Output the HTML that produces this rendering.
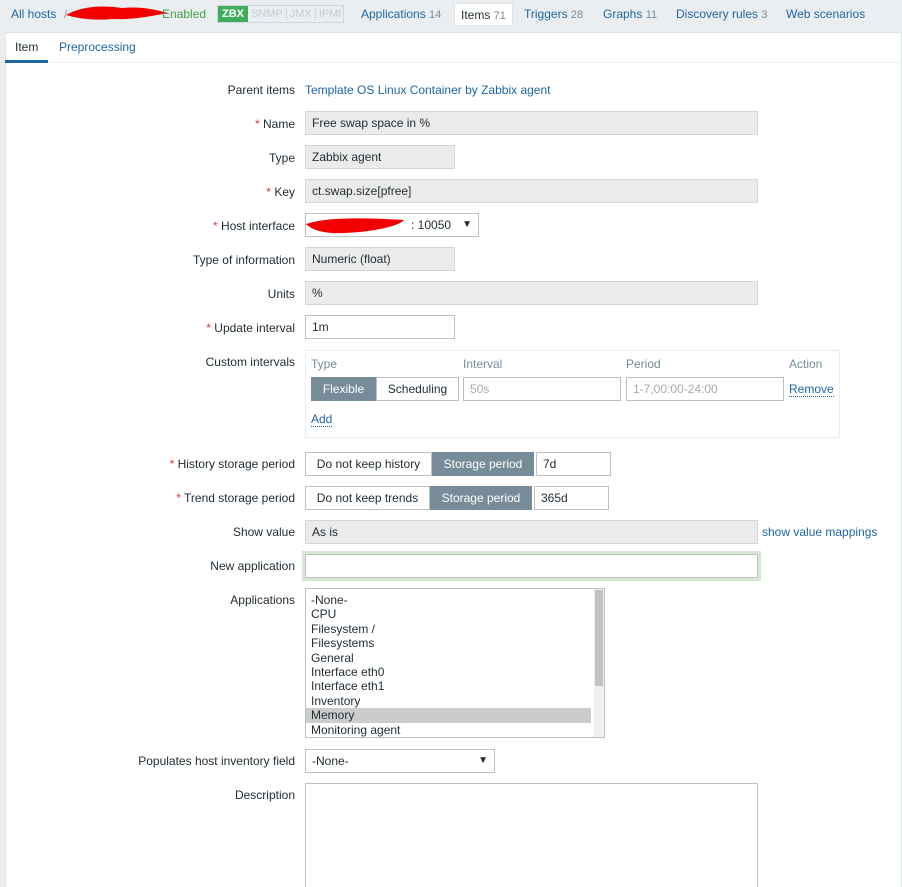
<!DOCTYPE html>
<html style="overflow:hidden;height:887px"><head><meta charset="utf-8"><style>
*{box-sizing:border-box;margin:0;padding:0}
body{width:902px;height:887px;overflow:hidden;background:#ebeef0;font-family:"Liberation Sans",Arial,sans-serif;font-size:12px;color:#1f2c33;position:relative}
.a{position:absolute;white-space:nowrap}
.lnk{color:#1f65a3}
.panel{position:absolute;left:5px;top:32px;width:897px;height:855px;background:#fff;border:1px solid #dfe4e7;border-bottom:none}
.lbl{position:absolute;right:607px;text-align:right;white-space:nowrap}
.req:before{content:"* ";color:#e33734}
.fld{position:absolute;left:305px;height:24px;border:1px solid #d6d6d6;background:#ebebeb;padding:0 6px;line-height:22px;white-space:nowrap}
.in{background:#fff;border:1px solid #bfbfbf}
.btn{position:absolute;height:24px;line-height:22px;border:1px solid #bfbfbf;text-align:center;white-space:nowrap}
.sel{background:#768d99;color:#fff;border-color:#768d99}
.ph{color:#aaa}
.dot{border-bottom:1px dotted #1f65a3}
</style></head><body>
<div class="a lnk" style="left:11px;top:7px">All hosts</div>
<div class="a" style="left:64px;top:7px;color:#999">/</div>
<svg class="a" style="left:62px;top:2px" width="110" height="22"><path d="M4 13 C20 4,40 3,60 6 C80 4,95 8,106 11 C90 14,70 18,50 17 C30 19,15 16,4 13Z" fill="#f20000"/></svg>
<div class="a" style="left:162px;top:7px;color:#429e47">Enabled</div>
<div class="a" style="left:217px;top:5px;height:18px;width:127px;border:1px solid #cfd5d8;font-size:11px;line-height:16px;color:#c5cbce">
<span style="display:inline-block;background:#3eae5e;color:#fff;padding:0 4px;font-weight:bold">ZBX</span><span style="padding:0 3px">SNMP</span><span style="border-left:1px solid #cfd5d8;padding:0 3px">JMX</span><span style="border-left:1px solid #cfd5d8;padding:0 3px">IPMI</span></div>
<div class="a lnk" style="left:361px;top:7px">Applications <span style="color:#768d99;font-size:11px">14</span></div>
<div class="a" style="left:454px;top:3px;height:23px;width:59px;background:#fff;border:1px solid #dfe4e7;padding:4px 6px">Items <span style="color:#768d99;font-size:11px">71</span></div>
<div class="a lnk" style="left:524px;top:7px">Triggers <span style="color:#768d99;font-size:11px">28</span></div>
<div class="a lnk" style="left:603px;top:7px">Graphs <span style="color:#768d99;font-size:11px">11</span></div>
<div class="a lnk" style="left:676px;top:7px">Discovery rules <span style="color:#768d99;font-size:11px">3</span></div>
<div class="a lnk" style="left:786px;top:7px">Web scenarios</div>
<div class="panel"></div>
<div class="a" style="left:5px;top:62px;width:897px;border-top:1px solid #ebeef0"></div>
<div class="a" style="left:15px;top:40px">Item</div>
<div class="a" style="left:5px;top:60px;width:43px;height:3px;background:#1f65a3"></div>
<div class="a lnk" style="left:59px;top:40px">Preprocessing</div>

<div class="lbl" style="top:83px">Parent items</div><div class="a lnk" style="left:305px;top:83px">Template OS Linux Container by Zabbix agent</div>
<div class="lbl req" style="top:117px">Name</div><div class="fld" style="top:111px;width:453px">Free swap space in %</div>
<div class="lbl" style="top:151px">Type</div><div class="fld" style="top:145px;width:150px">Zabbix agent</div>
<div class="lbl req" style="top:185px">Key</div><div class="fld" style="top:179px;width:453px">ct.swap.size[pfree]</div>
<div class="lbl req" style="top:219px">Host interface</div><div class="fld in" style="top:213px;width:174px;padding-left:105px">: 10050<span style="position:absolute;right:6px;font-size:10px">▼</span></div>
<svg class="a" style="left:304px;top:214px" width="105" height="22"><path d="M2 10 C20 4,50 3,100 6 C95 12,70 18,40 19 C20 20,8 16,2 10Z" fill="#f20000"/></svg>
<div class="lbl" style="top:253px">Type of information</div><div class="fld" style="top:247px;width:150px">Numeric (float)</div>
<div class="lbl" style="top:287px">Units</div><div class="fld" style="top:281px;width:453px">%</div>
<div class="lbl req" style="top:321px">Update interval</div><div class="fld in" style="top:315px;width:150px">1m</div>
<div class="lbl" style="top:355px">Custom intervals</div>
<div class="a" style="left:305px;top:350px;width:535px;height:88px;border:1px solid #ebeef0"></div>
<div class="a" style="left:311px;top:357px;color:#768d99">Type</div>
<div class="a" style="left:463px;top:357px;color:#768d99">Interval</div>
<div class="a" style="left:626px;top:357px;color:#768d99">Period</div>
<div class="a" style="left:789px;top:357px;color:#768d99">Action</div>
<div class="btn sel" style="left:311px;top:377px;width:65px">Flexible</div>
<div class="btn" style="left:376px;top:377px;width:83px">Scheduling</div>
<div class="fld in ph" style="left:463px;top:377px;width:158px">50s</div>
<div class="fld in ph" style="left:626px;top:377px;width:158px">1-7,00:00-24:00</div>
<div class="a lnk dot" style="left:789px;top:382px">Remove</div>
<div class="a lnk dot" style="left:311px;top:412px">Add</div>
<div class="lbl req" style="top:457px">History storage period</div>
<div class="btn" style="left:305px;top:452px;width:127px">Do not keep history</div>
<div class="btn sel" style="left:432px;top:452px;width:102px">Storage period</div>
<div class="fld in" style="left:536px;top:452px;width:75px">7d</div>
<div class="lbl req" style="top:491px">Trend storage period</div>
<div class="btn" style="left:305px;top:486px;width:125px">Do not keep trends</div>
<div class="btn sel" style="left:430px;top:486px;width:102px">Storage period</div>
<div class="fld in" style="left:534px;top:486px;width:75px">365d</div>
<div class="lbl" style="top:525px">Show value</div><div class="fld" style="top:520px;width:453px">As is</div>
<div class="a lnk" style="left:762px;top:525px">show value mappings</div>
<div class="lbl" style="top:559px">New application</div><div class="fld in" style="top:554px;width:453px;box-shadow:0 0 0 3px #d4e8d4"></div>
<div class="lbl" style="top:593px">Applications</div>
<div class="a" style="left:305px;top:588px;width:300px;height:150px;border:1px solid #bfbfbf;background:#fff;line-height:14.4px;padding:4px 5px">
-None-<br>CPU<br>Filesystem /<br>Filesystems<br>General<br>Interface eth0<br>Interface eth1<br>Inventory<br><div style="background:#ccc;margin:0 -5px 0 -5px;padding-left:5px;width:285px">Memory</div>Monitoring agent</div>
<div class="a" style="left:594px;top:589px;width:10px;height:148px;background:#f0f0f0"><div style="margin:1px;height:96px;background:#c1c1c1"></div></div>
<div class="lbl" style="top:754px">Populates host inventory field</div>
<div class="fld in" style="top:749px;width:190px">-None-<span style="position:absolute;right:6px;font-size:10px">▼</span></div>
<div class="lbl" style="top:788px">Description</div>
<div class="fld in" style="top:783px;width:453px;height:110px"></div>
</body></html>
